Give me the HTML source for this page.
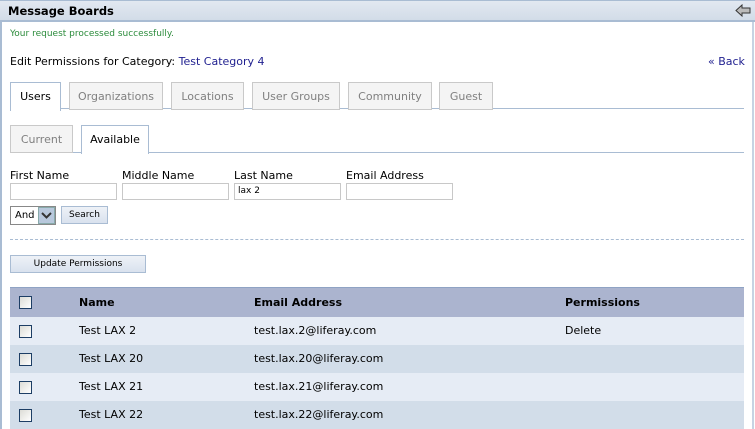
<!DOCTYPE html>
<html><head><style>
*{margin:0;padding:0;box-sizing:border-box}
body{width:755px;height:429px;overflow:hidden;background:#fff;font-family:"DejaVu Sans","Liberation Sans",sans-serif;font-size:11px;color:#000;position:relative}
.a{position:absolute}
.hdr{left:0;top:0;width:755px;height:22px;background:linear-gradient(#e2e8f1,#d2dce8);border-bottom:2px solid #a9bcd3;border-top:1px solid #a9bcd3}
.tab{position:absolute;height:28px;border:1px solid #c9c9c9;background:#f4f4f4;color:#808080;text-align:center;line-height:28px;font-size:11px}
.tab.on{background:#fff;border-color:#a9bcd3;border-bottom:none;color:#000;height:29px}
.inp{position:absolute;height:17px;border:1px solid #c8c8c8;background:#fff;font-size:9px;padding-left:3px;line-height:15px}
.lbl{position:absolute;font-size:11px}
.btn{position:absolute;border:1px solid #a9bcd3;background:linear-gradient(#eef2f7,#d9e2ee);font-size:9px;text-align:center}
.row{position:absolute;left:10px;width:734px;height:28px;line-height:28px}
.cb{position:absolute;left:9px;top:8px;width:13px;height:13px;border:1px solid #1d3e65;background:linear-gradient(135deg,#dcdcd6,#fff)}
.row span{position:absolute}
</style></head><body>
<div class="a hdr"><span class="a" style="left:8px;top:3px;font-weight:bold;font-size:11.5px;color:#000">Message Boards</span>
<svg class="a" style="left:735px;top:3px" width="16" height="13" viewBox="0 0 16 13"><path d="M1 6.5L7 1V4H15V9H7V12Z" fill="#bbb" stroke="#333" stroke-width="1"/></svg></div>
<div class="a" style="left:0;top:22px;width:2px;height:407px;background:#a9bcd3"></div>
<div class="a" style="left:752px;top:22px;width:2px;height:407px;background:#c6d3e3"></div>
<div class="a" style="left:10px;top:29px;font-size:9px;color:#2c8c3c">Your request processed successfully.</div>
<div class="a" style="left:10px;top:55px">Edit Permissions for Category: <span style="color:#1f1f8f">Test Category 4</span></div>
<div class="a" style="left:708px;top:55px;color:#1f1f8f">« Back</div>
<div class="a" style="left:10px;top:108px;width:734px;height:1px;background:#a9bcd3"></div>
<div class="tab on" style="left:10px;top:82px;width:51px">Users</div>
<div class="tab" style="left:69px;top:82px;width:94px">Organizations</div>
<div class="tab" style="left:171px;top:82px;width:73px">Locations</div>
<div class="tab" style="left:252px;top:82px;width:88px">User Groups</div>
<div class="tab" style="left:348px;top:82px;width:84px">Community</div>
<div class="tab" style="left:439px;top:82px;width:54px">Guest</div>
<div class="a" style="left:10px;top:152px;width:734px;height:1px;background:#a9bcd3"></div>
<div class="tab" style="left:10px;top:125px;width:63px">Current</div>
<div class="tab on" style="left:81px;top:125px;width:68px">Available</div>
<div class="lbl" style="left:10px;top:169px">First Name</div>
<div class="lbl" style="left:122px;top:169px">Middle Name</div>
<div class="lbl" style="left:234px;top:169px">Last Name</div>
<div class="lbl" style="left:346px;top:169px">Email Address</div>
<div class="inp" style="left:10px;top:183px;width:107px"></div>
<div class="inp" style="left:122px;top:183px;width:107px"></div>
<div class="inp" style="left:234px;top:183px;width:107px">lax 2</div>
<div class="inp" style="left:346px;top:183px;width:107px"></div>
<div class="a" style="left:10px;top:206px;width:46px;height:19px;border:1px solid #888;background:#fff;font-size:10px;line-height:17px;padding-left:4px">And</div>
<div class="a" style="left:38px;top:207px;width:17px;height:17px;background:#b8c8dc;border:1px solid #8aa"></div>
<svg class="a" style="left:41px;top:212px" width="11" height="7"><path d="M1 1L5.5 5.5L10 1" stroke="#333" stroke-width="2" fill="none"/></svg>
<div class="btn" style="left:61px;top:206px;width:47px;height:18px;line-height:16px">Search</div>
<div class="a" style="left:10px;top:239px;width:734px;border-top:1px dashed #a9bcd3"></div>
<div class="btn" style="left:10px;top:255px;width:136px;height:18px;line-height:16px">Update Permissions</div>
<div class="row" style="top:287px;height:30px;line-height:30px;background:#abb4cf;font-weight:bold;border-top:1px solid #8fa3c4"><div class="cb" style="top:8px"></div><span style="left:69px">Name</span><span style="left:244px">Email Address</span><span style="left:555px">Permissions</span></div>
<div class="row" style="top:317px;background:#e6ecf5"><div class="cb"></div><span style="left:69px">Test LAX 2</span><span style="left:244px">test.lax.2@liferay.com</span><span style="left:555px">Delete</span></div>
<div class="row" style="top:345px;background:#d2dde9"><div class="cb"></div><span style="left:69px">Test LAX 20</span><span style="left:244px">test.lax.20@liferay.com</span></div>
<div class="row" style="top:373px;background:#e6ecf5"><div class="cb"></div><span style="left:69px">Test LAX 21</span><span style="left:244px">test.lax.21@liferay.com</span></div>
<div class="row" style="top:401px;background:#d2dde9"><div class="cb"></div><span style="left:69px">Test LAX 22</span><span style="left:244px">test.lax.22@liferay.com</span></div>
</body></html>
